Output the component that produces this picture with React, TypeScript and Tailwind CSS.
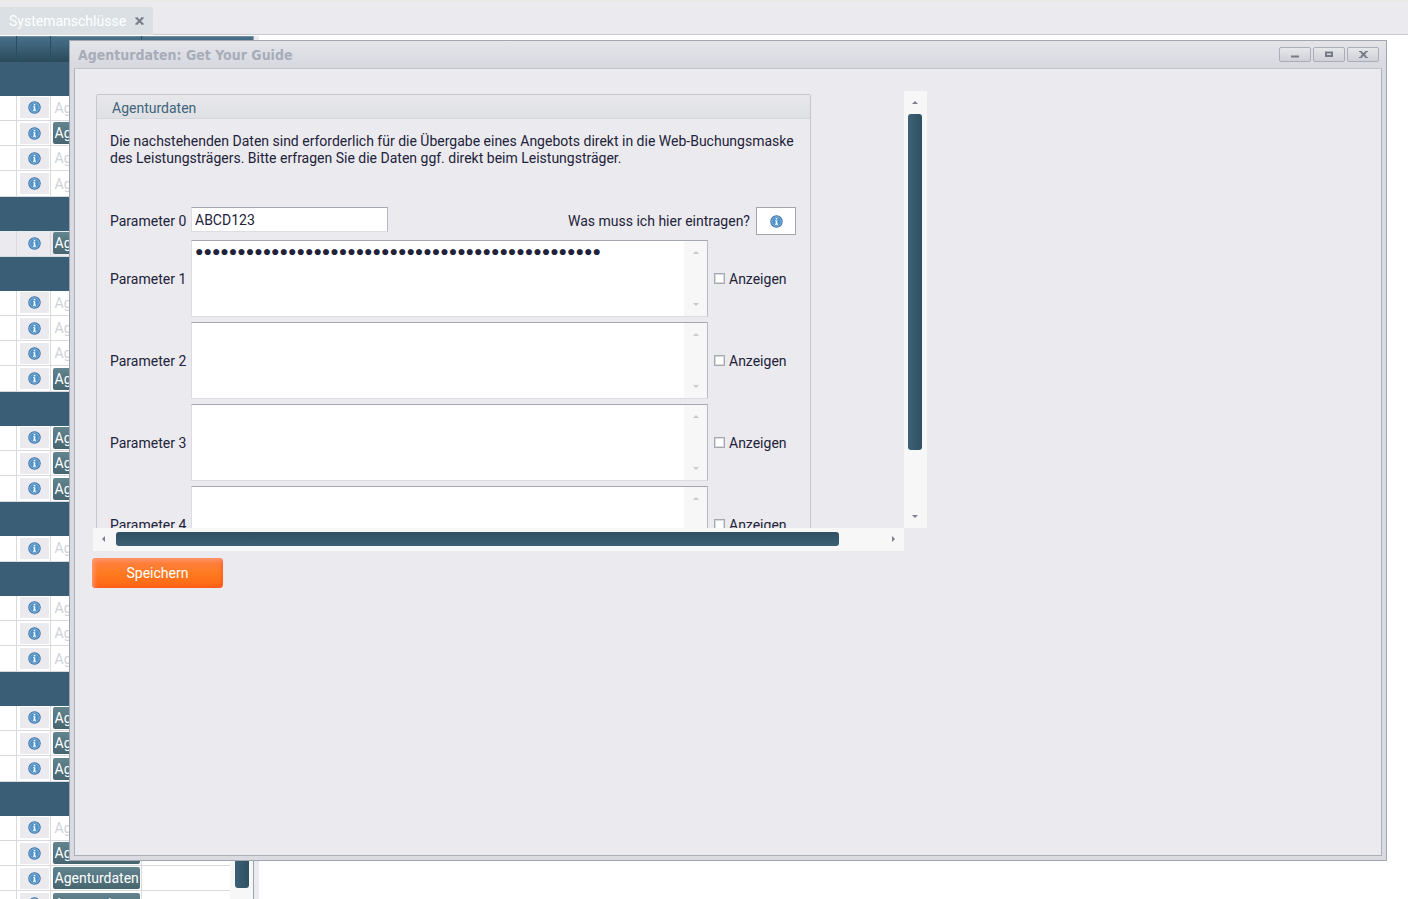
import type { ReactNode } from "react";

type Row = { active: boolean; shaded?: boolean };

const on: Row = { active: true };
const off: Row = { active: false };

const sections: Row[][] = [
  [off, on, off, off],
  [{ active: true, shaded: true }],
  [off, off, off, on],
  [on, on, on],
  [off],
  [off, off, off],
  [on, on, on],
  [off, on, on, on],
];

const secret = "●".repeat(48);

function InfoIcon() {
  return (
    <svg width="13" height="13" viewBox="0 0 13 13" aria-hidden="true">
      <circle cx="6.5" cy="6.5" r="6.2" fill="#3b6fa6" />
      <circle cx="6.5" cy="6.5" r="4.8" fill="#4d92c9" stroke="#9cc4e4" strokeWidth="0.8" />
      <rect x="5.7" y="3" width="1.6" height="1.4" fill="#fff" />
      <path d="M5.1 5.2h2.2v3.6h.7v.9H5v-.9h.7V6.1h-.6z" fill="#fff" />
    </svg>
  );
}

type Direction = "up" | "down" | "left" | "right";

const arrows: Record<Direction, string> = {
  up: "M0 5h6L3 2z",
  down: "M0 1h6L3 4z",
  left: "M4 0v6L1 3z",
  right: "M2 0v6l3-3z",
};

function Arrow({ dir, color = "#7d7f8e" }: { dir: Direction; color?: string }) {
  return (
    <svg width="6" height="6" viewBox="0 0 6 6" aria-hidden="true">
      <path d={arrows[dir]} fill={color} />
    </svg>
  );
}

function TabBar() {
  return (
    <header className="flex h-[35px] items-end border-b border-[#c9cad1] bg-[#ebeaee] border-t-2 border-t-[#e9e9e6]">
      <div className="flex h-7 w-[153px] items-center justify-between rounded-tr bg-[#dae0e3] pl-[9px] pr-2 -mb-px">
        <a href="#anschluesse" className="text-white">
          Systemanschlüsse
        </a>
        <button type="button" aria-label="Tab schließen" className="p-px">
          <svg width="9" height="8" viewBox="0 0 9 8">
            <path d="M1.5 1l6 6M7.5 1l-6 6" stroke="#777a88" strokeWidth="2" />
            <path d="M0 1h3M6 1h3M0 7h3M6 7h3" stroke="#777a88" />
          </svg>
        </button>
      </div>
    </header>
  );
}

function ConnectionTable() {
  return (
    <div className="flex w-[254px] shrink-0 border-r border-[#9ea4ae] bg-white">
      <table className="w-[230px] shrink-0 table-fixed border-collapse self-start">
        <colgroup>
          <col className="w-4" />
          <col className="w-[34px]" />
          <col className="w-[91px]" />
          <col />
        </colgroup>
        <thead>
          <tr className="h-[25px] bg-linear-to-b from-[#48708a] to-[#2a4a5b]">
            <th className="border-r border-t border-[#2b4d60] border-t-[#6f8d9c]" />
            <th className="border-r border-t border-[#2b4d60] border-t-[#6f8d9c]" />
            <th className="border-r border-t border-[#2b4d60] border-t-[#6f8d9c]" />
            <th className="border-t border-t-[#6f8d9c]" />
          </tr>
        </thead>
        {sections.map((rows, s) => (
          <tbody key={s}>
            <tr className="h-[34px] bg-[#3a5e75]">
              <td colSpan={4} />
            </tr>
            {rows.map((row, i) => (
              <tr
                key={i}
                className={`h-[25px] last:h-[26px] border-b border-[#d9dade] ${
                  row.shaded ? "bg-[#ebeaee]" : "bg-white"
                }`}
              >
                <td className="border-r border-[#d9dade] p-0" />
                <td className="border-r border-[#d9dade] px-[3px] py-0 pr-px">
                  <button
                    type="button"
                    aria-label="Info"
                    className="flex h-[21px] w-full items-center justify-center bg-[#ebeaee]"
                  >
                    <InfoIcon />
                  </button>
                </td>
                <td className="border-r border-[#d9dade] py-0 pl-0.5 pr-px">
                  <button
                    type="button"
                    disabled={!row.active}
                    className={`block h-[22px] w-full rounded-xs pl-0.5 text-left leading-[22px] ${
                      row.active
                        ? "bg-linear-to-b from-[#638590] to-[#46656f] text-white"
                        : "text-[#cfd2d9]"
                    }`}
                  >
                    Agenturdaten
                  </button>
                </td>
                <td className="p-0" />
              </tr>
            ))}
          </tbody>
        ))}
      </table>
      <div className="flex flex-1 flex-col items-center bg-[#f7f7f7]">
        <div className="h-[26px] w-full shrink-0 border-t border-[#6f8d9c] bg-linear-to-b from-[#48708a] to-[#2a4a5b]" />
        <div className="h-[826px] w-3.5 shrink-0 rounded-[3px] bg-linear-to-r from-[#3c6075] to-[#2f5061]" />
      </div>
    </div>
  );
}

function WindowButton({ label, children }: { label: string; children: ReactNode }) {
  return (
    <button
      type="button"
      aria-label={label}
      className="flex h-[15px] w-8 items-center justify-center rounded-xs border border-[#abaeb8] bg-linear-to-b from-[#e6e7ea] to-[#cfd1d8]"
    >
      <svg width="9" height="7" viewBox="0 0 9 7" stroke="#777a88" fill="none">
        {children}
      </svg>
    </button>
  );
}

function ParameterRow({ index, value = "" }: { index: number; value?: string }) {
  const id = `parameter-${index}`;
  return (
    <div className="flex items-center">
      <label htmlFor={id} className="w-[81px] shrink-0">
        Parameter {index}
      </label>
      <div className="flex h-[77px] flex-1 border border-[#dcdce1] border-r-[#b9bac3] border-t-[#a2a7b1] bg-white">
        <textarea
          id={id}
          defaultValue={value}
          spellCheck={false}
          className="flex-1 resize-none overflow-hidden px-[3px] font-['Liberation_Sans',sans-serif] outline-none"
        />
        <div className="flex w-[23px] flex-col items-center justify-between bg-[#f7f7f7] py-2">
          <Arrow dir="up" color="#c9cad0" />
          <Arrow dir="down" color="#c9cad0" />
        </div>
      </div>
      <label className="flex w-[88px] items-center gap-1 pl-1.5">
        <input
          type="checkbox"
          className="size-[11px] appearance-none border border-[#a4a9b3] bg-white shadow-[inset_0_0_0_1px_#d9dade]"
        />
        Anzeigen
      </label>
    </div>
  );
}

function AgencyForm() {
  return (
    <section className="w-[715px] shrink-0 rounded-t-xs border border-[#c6c7ce]">
      <h2 className="h-6 border-b border-[#d6d7dd] bg-linear-to-b from-[#e8e8ec] to-[#dfe0e4] pl-[15px] leading-[26px] text-[#3f647b]">
        Agenturdaten
      </h2>
      <div className="pl-[13px] pr-3.5">
        <p className="mt-3.5 leading-[17px]">
          Die nachstehenden Daten sind erforderlich für die Übergabe eines Angebots direkt in die Web-Buchungsmaske
          des Leistungsträgers. Bitte erfragen Sie die Daten ggf. direkt beim Leistungsträger.
        </p>
        <div className="mb-[5px] mt-10 flex h-7 items-center">
          <label htmlFor="parameter-0" className="w-[81px]">
            Parameter 0
          </label>
          <input
            id="parameter-0"
            defaultValue="ABCD123"
            className="h-[25px] w-[197px] self-start border border-[#dcdce1] border-r-[#b9bac3] border-t-[#a2a7b1] bg-white px-[3px] outline-none"
          />
          <span className="ml-auto mr-1.5">Was muss ich hier eintragen?</span>
          <button
            type="button"
            aria-label="Info"
            className="flex h-7 w-10 items-center justify-center border border-[#a5a6ab] bg-white"
          >
            <InfoIcon />
          </button>
        </div>
        <div className="flex flex-col gap-[5px] pb-4">
          <ParameterRow index={1} value={secret} />
          <ParameterRow index={2} />
          <ParameterRow index={3} />
          <ParameterRow index={4} />
        </div>
      </div>
    </section>
  );
}

function ScrollPane({ children }: { children: ReactNode }) {
  return (
    <div className="grid w-[834px] grid-cols-[1fr_23px] grid-rows-[437px_23px]">
      <div className="overflow-hidden p-[3px]">{children}</div>
      <div className="flex flex-col items-center justify-between bg-[#f7f7f7] py-2 pr-px">
        <Arrow dir="up" />
        <div className="mb-auto mt-[9px] h-[336px] w-3.5 rounded-[3px] bg-linear-to-r from-[#3c6075] to-[#2f5061]" />
        <Arrow dir="down" />
      </div>
      <div className="flex items-center justify-between bg-[#f7f7f7] px-2 pb-px">
        <Arrow dir="left" />
        <div className="ml-[9px] mr-auto h-3.5 w-[723px] rounded-[3px] bg-linear-to-b from-[#2f5061] to-[#3c6075]" />
        <Arrow dir="right" />
      </div>
    </div>
  );
}

function Dialog() {
  return (
    <div
      role="dialog"
      aria-label="Agenturdaten: Get Your Guide"
      className="absolute bottom-[38px] left-[69px] right-[21px] top-10 flex flex-col border border-[#a0a6b0] bg-[#dadbe1] px-1 pb-1"
    >
      <div className="-mx-1 flex h-[27px] items-center justify-between bg-linear-to-b from-[#e4e4e8] via-[#dcdfe5] to-[#d8d8df] pl-2 pr-[7px]">
        <h1 className="font-['DejaVu_Sans_Condensed',sans-serif] font-bold text-[#a8acb8]">
          Agenturdaten: Get Your Guide
        </h1>
        <div className="flex gap-0.5">
          <WindowButton label="Minimieren">
            <path d="M0 5.5h8" strokeWidth="2" />
          </WindowButton>
          <WindowButton label="Maximieren">
            <path d="M1 1.5h6v3.5h-6z" strokeWidth="2" />
          </WindowButton>
          <WindowButton label="Schließen">
            <path d="M2 1l5 5M7 1l-5 5" strokeWidth="2" />
            <path d="M0 .5h3M6 .5h3M0 6.5h3M6 6.5h3" />
          </WindowButton>
        </div>
      </div>
      <div className="flex-1 overflow-hidden border border-[#abb0b9] border-t-[#c3c5cc] bg-[#ebeaee] pl-[18px] pt-[22px]">
        <ScrollPane>
          <AgencyForm />
        </ScrollPane>
        <button
          type="button"
          className="-ml-px mt-[7px] h-[30px] w-[131px] rounded bg-linear-to-b from-[#ff8145] via-[#ff7a1f] to-[#ff6414] text-white shadow-[inset_2px_2px_4px_#ff9a78,inset_-1px_-1px_3px_#ff5010]"
        >
          Speichern
        </button>
      </div>
    </div>
  );
}

export default function App() {
  return (
    <div className="relative flex h-screen flex-col overflow-hidden bg-white font-['Roboto',sans-serif] text-sm text-[#22223a]">
      <TabBar />
      <main className="flex min-h-0 flex-1 overflow-hidden pt-px">
        <ConnectionTable />
        <div className="w-[5px] bg-[#ebeaee]" />
      </main>
      <Dialog />
    </div>
  );
}
